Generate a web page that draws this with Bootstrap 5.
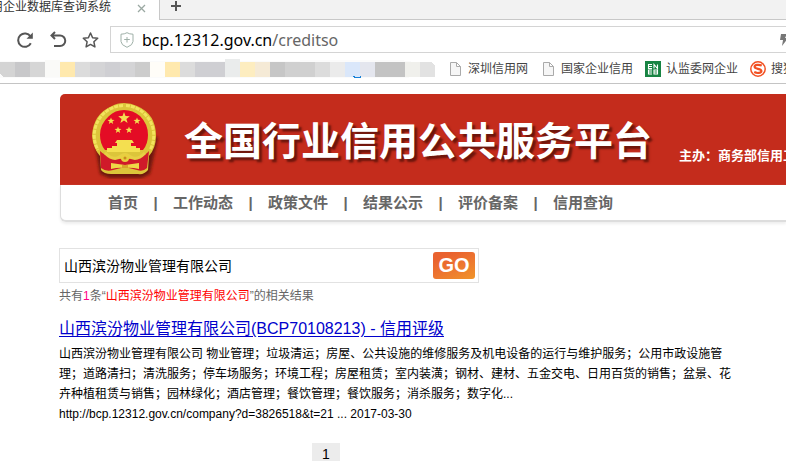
<!DOCTYPE html>
<html lang="zh-CN">
<head>
<meta charset="utf-8">
<meta name="viewport" content="width=device-width, initial-scale=1">
<title>全国行业信用公共服务平台</title>
<link href="https://cdn.jsdelivr.net/npm/bootstrap@5.3.0/dist/css/bootstrap.min.css" rel="stylesheet">
<style>
body{font-family:"Liberation Sans","Noto Sans CJK SC",sans-serif;font-size:12px;line-height:20px;color:#000;background:#fff;overflow-x:hidden}
a{text-decoration:none;color:inherit}
svg{display:block;flex:none}
button{border:0;background:none;padding:0;color:inherit}
.tabstrip{height:20px;background:#f2f2f2}
.tab-open{width:160px;background:#fff;border-right:1px solid #c8c8c8;line-height:14px;color:#333;gap:26px;padding-right:13px}
.tab-rest{border-bottom:1px solid #c8c8c8;padding-left:10px}
.toolbar-row{padding:6px 0 4px 16px;gap:15px}
.address{border:1px solid #d4d4d4;border-right:0;height:27px;padding-left:9px;margin-left:-4px}
.address .url{font:16px "Noto Sans",sans-serif;color:#666;white-space:nowrap}
.url b{font-weight:400;color:#000}
.bookmarks{height:27px;border-bottom:1px solid #c4c4c4;color:#444;white-space:nowrap;padding-bottom:2px}
.bookmarks a{gap:5px;margin-left:12px}
.site{padding:10px 0 0 60px}
.banner{background:#c42c1c;height:91px;border-radius:5px 0 0 0;color:#fff;padding-left:30px}
.banner h1{font-size:39px;line-height:48px;font-weight:700;text-shadow:3px 3px 2px #6d160c;margin:4px 0 0 24px}
.sponsor{font-size:13px;font-weight:700;margin:32px 0 0 27px}
.menu{height:37px;border:1px solid #ddd;border-width:0 0 2px 1px;border-radius:0 0 0 6px;box-shadow:0 2px 3px #eee;font-size:15px;font-weight:700;color:#666;padding-left:47px}
.menu li+li::before{content:"|";display:inline-block;width:35px;text-align:center}
.search{width:420px;max-width:100%;height:35px;border:1px solid #e2e2e2;margin:26px 0 0 -1px;padding:0 3px 0 4px}
.search input{border:0;outline:0;padding:0;font-size:14px;color:#000}
.go{width:42px;height:27px;border-radius:3px;background:linear-gradient(155deg,#e9622f 20%,#ed7630 55%,#f0952a);color:#fff;font-size:20px;line-height:27px;font-weight:700}
.summary{color:#666;margin:3px 0 0 -1px}
.hit{color:red}
.count{color:#f08}
.result-title{font-size:16px;line-height:24px;margin:11px 0 3px -1px;font-weight:400}
.result-title a{color:#00c;text-decoration:underline;text-underline-offset:2px}
.snippet{max-width:674px;margin:0 0 0 -1px}
.pages{margin:19px 0 0 252px}
.pages a{width:28px;line-height:22px;font-size:14px;background:#ececec;text-align:center}
</style>
<script src="https://cdn.jsdelivr.net/npm/bootstrap@5.3.0/dist/js/bootstrap.bundle.min.js"></script>
</head>
<body>
<header>
  <div class="tabstrip d-flex">
    <div class="tab-open d-flex justify-content-end overflow-hidden text-nowrap">
      <span>用企业数据库查询系统</span>
      <button type="button" class="align-self-start mt-1" aria-label="关闭标签页"><svg width="9" height="9" viewBox="0 0 9 9" stroke="#9aa8a2" stroke-width="1.3"><path d="M1 1l7 7M8 1L1 8"/></svg></button>
    </div>
    <div class="tab-rest flex-grow-1">
      <button type="button" class="d-block" aria-label="新标签页"><svg width="12" height="12" viewBox="0 0 12 12" stroke="#555" stroke-width="2"><path d="M6 1v10M1 6h10"/></svg></button>
    </div>
  </div>
  <div class="toolbar-row d-flex align-items-center">
    <button type="button" aria-label="刷新"><svg width="18" height="18" viewBox="0 0 18 18" fill="none" stroke="#555" stroke-width="2"><path d="M14.8 12.2A6.7 6.7 0 1 1 14.5 5.5"/><path d="M16.8 1.5v6.3h-6.3z" fill="#555" stroke="none"/></svg></button>
    <button type="button" aria-label="后退"><svg width="18" height="18" viewBox="0 0 18 18" fill="none" stroke="#555" stroke-width="2"><path d="M6 1L2.500 4.500 6 8M2.500 4.500H11a4.700 4.700 0 0 1 0 10.500H5"/></svg></button>
    <button type="button" aria-label="收藏"><svg width="17" height="18" viewBox="0 0 17 18" fill="none" stroke="#555" stroke-width="1.5" stroke-linejoin="round"><path d="M8.500 2l2.100 4.700 5.100.600-3.800 3.500 1 5.100-4.400-2.500-4.400 2.500 1-5.100L1.300 7.300l5.100-.600z"/></svg></button>
    <div class="address d-flex align-items-center flex-grow-1 overflow-hidden">
      <svg width="14" height="16" viewBox="0 0 14 16" fill="none" stroke="#9fb0a8"><path d="M1 2.200Q4.500 2.200 7 .700 9.500 2.200 13 2.200V9.500Q13 13 7 15.300 1 13 1 9.500zM7 5v5.500M4.200 7.500h5.600"/></svg>
      <span class="url flex-grow-1 ps-2"><b>bcp.12312.gov.cn</b>/creditso</span>
      <svg width="7" height="14" viewBox="0 0 7 14"><path d="M2 1h6L6 5h3L3 13l1-6H1z" fill="#777"/></svg>
    </div>
  </div>
  <nav class="bookmarks d-flex align-items-center overflow-hidden" aria-label="书签">
    <svg width="435" height="20" viewBox="0 0 435 20" shape-rendering="crispEdges">
      <path d="M0 2h300v-1h100l35 5v11l-35 2H0z" fill="#fbfbfb"/>
      <g><path d="M0 3h15v15H4l-4-3z" fill="#d4d4d4"/><path d="M15 3h15v15H15z" fill="#c8c8ca"/><path d="M30 3h15v15H30z" fill="#d6d6d6"/><path d="M45 1h15v17H45z" fill="#fafaf8"/><path d="M60 3h15v15H60zM165 3h15v15H165z" fill="#ffe9ae"/><path d="M75 3h15v15H75zM180 3h15v15H180zM315 3h15v15H315z" fill="#dcdcdc"/><path d="M90 3h15v15H90zM120 3h15v15H120z" fill="#d4d4d6"/><path d="M105 3h15v15H105zM195 3h30v15H195z" fill="#cfcfd3"/><path d="M135 3h15v15H135z" fill="#ccc"/><path d="M150 3h15v15H150z" fill="#fffdf8"/><path d="M225 0h15v18H225z" fill="#eaecec"/><path d="M240 3h15v15H240z" fill="#fdedc0"/><path d="M255 3h15v15H255z" fill="#f5ead6"/><path d="M270 3h15v15H270z" fill="#c6c6c6"/><path d="M285 3h30v15H285z" fill="#d0d0d0"/><path d="M330 3h15v15H330z" fill="#ebebeb"/><path d="M345 3h15v15H345z" fill="#dae7fa"/><path d="M360 3h15v15H360z" fill="#e4e6ee"/><path d="M375 3h30v15H375z" fill="#c3c3c3"/><path d="M405 3h15v15H405z" fill="#f0f0ec"/><path d="M420 3h11l4 3v12H420z" fill="#e2e2e2"/></g>
      <path d="M353 17.500h1v1h6v-1h1" stroke="#1680d8" fill="none"/>
    </svg>
    <a class="d-flex align-items-center" href="#"><svg width="16" height="14" viewBox="-3 0 16 14" fill="#f6f6f6" stroke="#aaa"><path d="M.5.5h6l4 4v9H.5zM6.500.5v4h4"/></svg>深圳信用网</a>
    <a class="d-flex align-items-center" href="#"><svg width="16" height="14" viewBox="-3 0 16 14" fill="#f6f6f6" stroke="#aaa"><path d="M.5.5h6l4 4v9H.5zM6.500.5v4h4"/></svg>国家企业信用</a>
    <a class="d-flex align-items-center" href="#"><svg width="16" height="16" viewBox="0 0 16 16"><path d="M0 0h16v16H0z" fill="#188443"/><path d="M7 3.500H3.500v4H7M3.500 5.500H7M9 7.500v-4l3.500 4v-4M7 9H3.500v4H7M3.500 11H7M9 9h3.500v4H9zM9 11h3.500" fill="none" stroke="#fff" stroke-width="1.100"/></svg>认监委网企业</a>
    <a class="d-flex align-items-center" href="#"><svg width="16" height="16" viewBox="0 0 16 16" fill="none" stroke="#f25022"><circle cx="8" cy="8" r="7.200" stroke-width="1.500"/><path d="M11.800 4.600C9 3.300 4.600 3.500 4.600 5.800c0 2.700 6.800 1.500 6.800 4.200 0 2.300-4.500 2.500-7.200 1.100" stroke-width="2.200"/></svg>搜狗</a>
  </nav>
</header>
<main class="site">
  <div class="banner d-flex align-items-center overflow-hidden text-nowrap">
    <svg width="70" height="78" viewBox="0 0 70 78">
      <defs><filter id="soft"><feGaussianBlur stdDeviation="1.500"/></filter>
      <path id="star" d="M0-6l1.500 4.100 4.300.1-3.400 2.700 1.200 4.200L0 2.600l-3.600 2.500 1.200-4.200-3.400-2.700 4.300-.1z"/></defs>
      <path d="M4 36L10 73l9 4h33l8-4 8-37z" fill="#6d160c" filter="url(#soft)"/>
      <path d="M22 5Q27 2 34 2t13 3q19 8 19 30 0 12-7 20L58 69Q54 74 48 73H21Q14 73 11 69L10 55Q3 47 2 35 3 13 22 5z" fill="#dcc53a"/>
      <path d="M33 4.500A30 30 0 0 0 8 49M36 4.500A30 30 0 0 1 60 49" fill="none" stroke="#f3e45e" stroke-width="3" stroke-dasharray="4 1"/>
      <path d="M19 15Q25 9 34 9t16 6q8 8 8 19 0 9-5 15H15q-5-6-5-15 0-11 9-19z" fill="#e40c25"/>
      <path d="M10 50q5 5 12 6l13 3 13-3q7-1 11-6l-2 17q-4 4-10 2l-12-3-12 3q-7 2-12-2z" fill="#d01a2a"/>
      <g fill="#f4df50"><use href="#star" x="34" y="17"/><use href="#star" transform="translate(21 20) scale(.6)"/><use href="#star" transform="translate(47 20) scale(.6)"/><use href="#star" transform="translate(28 29) scale(.6)"/><use href="#star" transform="translate(39 29) scale(.6)"/>
      <path d="M27 39h15l2 3h-3v3h5v2h4v4H17v-4h5v-2h5v-3h-2z"/></g>
      <path d="M15 52q9 9 16 3 4-3 8 0 7 6 16-3" fill="none" stroke="#e7cf45" stroke-width="3"/>
      <circle cx="35" cy="57" r="4" fill="#e9cf3f"/><circle cx="35" cy="57" r="1.500" fill="#c98e1d"/>
      <path d="M21 62q7 1 14 2 7-1 14-2v6q-8-2-14-1-6-1-14 1z" fill="#efd947"/>
      <path d="M32 64h6v3h-6z" fill="#d8a52a"/>
    </svg>
    <h1>全国行业信用公共服务平台</h1>
    <span class="sponsor">主办：商务部信用工作办公室</span>
  </div>
  <nav aria-label="主导航">
    <ul class="menu list-unstyled d-flex align-items-center text-nowrap mb-0">
      <li><a href="#">首页</a></li><li><a href="#">工作动态</a></li><li><a href="#">政策文件</a></li><li><a href="#">结果公示</a></li><li><a href="#">评价备案</a></li><li><a href="#">信用查询</a></li>
    </ul>
  </nav>
  <form class="search d-flex align-items-center">
    <input class="flex-grow-1" type="text" aria-label="企业名称" value="山西滨汾物业管理有限公司">
    <button class="go" type="submit">GO</button>
  </form>
  <p class="summary">共有<span class="count">1</span>条“<span class="hit">山西滨汾物业管理有限公司</span>”的相关结果</p>
  <article>
    <h2 class="result-title"><a href="#">山西滨汾物业管理有限公司(BCP70108213) - 信用评级</a></h2>
    <p class="snippet">山西滨汾物业管理有限公司 物业管理；垃圾清运；房屋、公共设施的维修服务及机电设备的运行与维护服务；公用市政设施管理；道路清扫；清洗服务；停车场服务；环境工程；房屋租赁；室内装潢；钢材、建材、五金交电、日用百货的销售；盆景、花卉种植租赁与销售；园林绿化；酒店管理；餐饮管理；餐饮服务；消杀服务；数字化...<br>http://bcp.12312.gov.cn/company?d=3826518&amp;t=21 ... 2017-03-30</p>
  </article>
  <nav class="pages d-flex" aria-label="分页"><a href="#" aria-current="page">1</a></nav>
</main>
</body>
</html>
